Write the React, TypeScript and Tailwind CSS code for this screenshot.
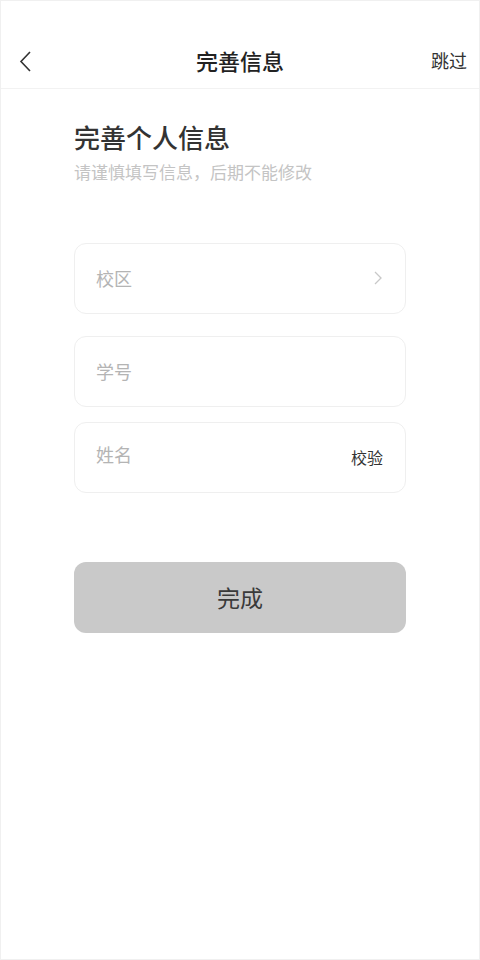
import React from "react";

function Field({ label, right, lift }: { label: string; right?: React.ReactNode; lift?: boolean }) {
  return (
    <div className="flex h-[71px] items-center justify-between rounded-[12px] border border-[#efefef] bg-white pl-[21px] pr-[22px]">
      <span className={lift ? "-mt-[5px] text-[18px] text-[#b4b4b4]" : "text-[18px] text-[#b4b4b4]"}>{label}</span>
      {right}
    </div>
  );
}

export default function App() {
  return (
    <div
      className="flex h-[960px] w-[480px] flex-col border border-[#f0f0f0] bg-white"
      style={{ fontFamily: '"Noto Sans CJK SC", "Noto Sans", sans-serif' }}
    >
      <div className="shrink-0 border-b border-[#f2f2f2] pt-[35px]">
        <div className="relative flex h-[52px] items-center justify-center pb-[4px]">
          <svg
            className="absolute left-[17px] top-[14px]"
            width="16"
            height="24"
            viewBox="0 0 16 24"
            fill="none"
            stroke="#333"
            strokeWidth="1.6"
          >
            <path d="M12 2 L3 11.5 L12 21" />
          </svg>
          <h1 className="text-[22px] font-medium text-[#222]">完善信息</h1>
          <span className="absolute right-[12px] top-[11px] text-[18px] text-[#333]">跳过</span>
        </div>
      </div>

      <div className="px-[73px] pt-[30px]">
        <h2 className="text-[26px] font-medium leading-[36px] text-[#333]">完善个人信息</h2>
        <p className="mt-[4px] text-[17px] text-[#c4c4c4]">请谨慎填写信息，后期不能修改</p>

        <div className="mt-[58px] flex flex-col">
          <Field
            label="校区"
            right={
              <svg width="10" height="16" viewBox="0 0 10 16" fill="none" stroke="#c8c8c8" strokeWidth="1.3">
                <path d="M2 2 L8 8 L2 14" />
              </svg>
            }
          />
          <div className="mt-[22px]">
            <Field label="学号" />
          </div>
          <div className="mt-[15px]">
            <Field label="姓名" lift right={<span className="-mt-[1px] text-[16px] text-[#333]">校验</span>} />
          </div>
        </div>

        <button className="mt-[69px] flex h-[71px] w-full items-center justify-center rounded-[12px] bg-[#c9c9c9] text-[23px] text-[#3a3a3a]">
          完成
        </button>
      </div>
    </div>
  );
}
